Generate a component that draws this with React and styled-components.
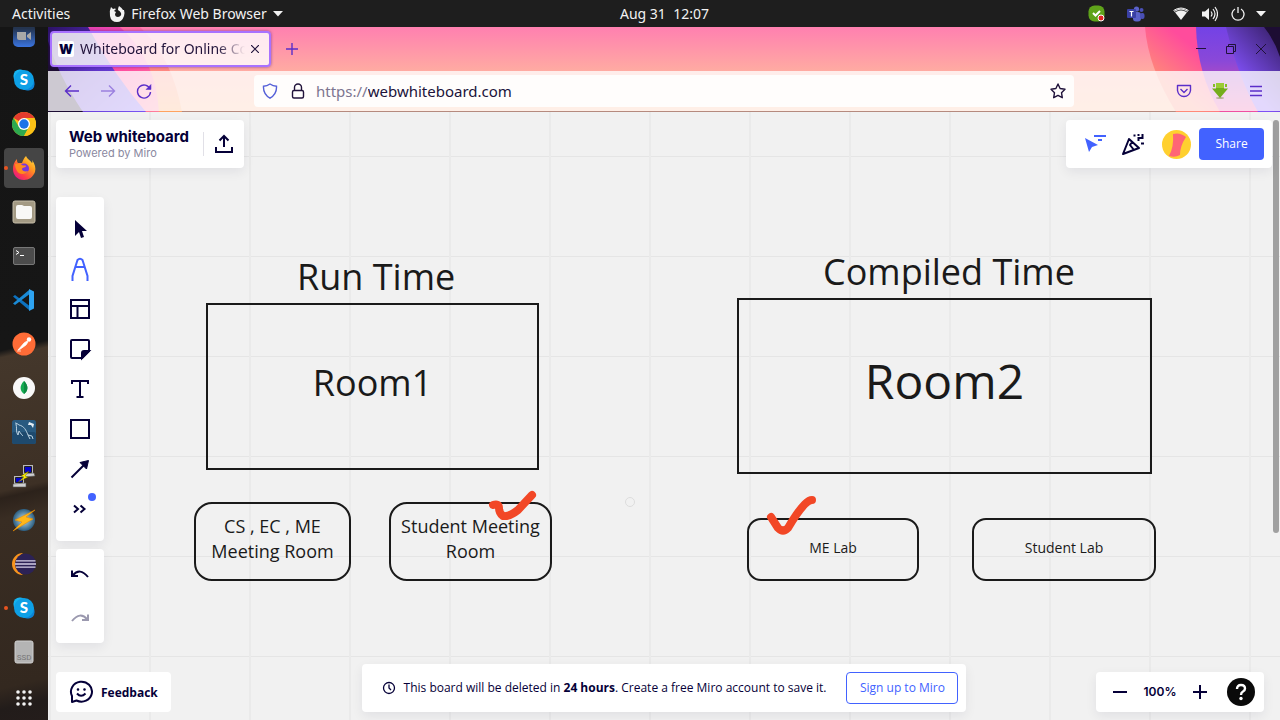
import React from "react";
import styled, { createGlobalStyle } from "styled-components";

const INK = "#050038";
const BLUE = "#4262ff";
const VIOLET = "#5b2ec9";
const UI_FONT = '"Noto Sans", "Open Sans", sans-serif';
const BOARD_FONT = '"Open Sans", "Noto Sans", sans-serif';

const GlobalStyle = createGlobalStyle`
  *, *::before, *::after { box-sizing: border-box; }
  body { margin: 0; font-family: ${UI_FONT}; }
  button { font: inherit; }
  svg { display: block; flex: none; }
`;

/* ---------- shell ---------- */

const Desktop = styled.div`
  display: flex;
  flex-direction: column;
  height: 100vh;
  overflow: hidden;
`;

const Workspace = styled.div`
  display: flex;
  flex: 1;
  min-height: 0;
`;

const PlainButton = styled.button`
  display: flex;
  align-items: center;
  justify-content: center;
  gap: ${(p) => p.$gap || 0}px;
  width: ${(p) => (p.$w ? `${p.$w}px` : "auto")};
  height: ${(p) => (p.$h ? `${p.$h}px` : "auto")};
  padding: 0;
  border: 0;
  background: none;
  color: inherit;
  cursor: pointer;
`;

/* ---------- system bar ---------- */

const SystemBar = styled.header`
  display: grid;
  grid-template-columns: calc(50% - 20px) 1fr auto;
  align-items: center;
  height: 27px;
  background: #1e1e1e;
  color: #f2f2f2;
  font-size: 14px;
  line-height: 20px;
  white-space: pre;
`;

const SystemMenus = styled.nav`
  display: flex;
  align-items: center;
  gap: 39px;
  padding-left: 12px;
`;

const Tray = styled.div`
  display: flex;
  align-items: center;
  padding-right: 10px;
`;

const TrayItem = styled.span`
  display: flex;
  justify-content: center;
  width: ${(p) => p.$w}px;
`;

/* ---------- dock ---------- */

const DockBar = styled.aside`
  display: flex;
  flex: none;
  flex-direction: column;
  justify-content: flex-end;
  width: 48px;
  overflow: hidden;
  background: linear-gradient(
    167deg,
    #151515 0%,
    #161616 46%,
    #44372b 47%,
    #3d3025 66%,
    #2c221b 67%,
    #392d23 70%,
    #33281f 94%,
    #221c1a 97%,
    #241d1b 100%
  );
`;

const DockItem = styled.button`
  position: relative;
  display: flex;
  flex: none;
  align-items: center;
  justify-content: center;
  width: 40px;
  height: 40px;
  margin: 2px 4px;
  padding: 0;
  border: 0;
  border-radius: 4px;
  background: ${(p) => (p.$active ? "#454545" : "transparent")};

  &:last-child {
    margin-top: 4px;
  }

  &::before {
    content: "";
    display: ${(p) => (p.$running ? "block" : "none")};
    position: absolute;
    left: 0;
    width: 4px;
    height: 4px;
    border-radius: 50%;
    background: #e95420;
  }
`;

/* ---------- browser chrome ---------- */

const Browser = styled.main`
  display: flex;
  flex: 1;
  flex-direction: column;
  min-width: 0;
`;

const Chrome = styled.div`
  position: relative;
  border-bottom: 1px solid #b58a7e;
  background: linear-gradient(#ff80b0, #ffaba2 44px, #ffb690);
`;

const ChromeArt = styled.svg`
  position: absolute;
  top: 0;
  ${(p) => p.$side}: 0;
`;

const TabStrip = styled.div`
  position: relative;
  display: flex;
  align-items: center;
  height: 44px;
  padding: 0 4px 0 2px;
  color: #20123a;
`;

const Tab = styled.div`
  display: flex;
  align-items: center;
  gap: 6px;
  width: 221px;
  height: 36px;
  padding: 0 10px 0 6px;
  border: 2px solid #a872ff;
  border-radius: 4px;
  background: rgba(255, 255, 255, 0.82);
  box-shadow: 0 0 3px rgba(60, 20, 140, 0.6);
  font-size: 14px;
  line-height: 20px;
`;

const Favicon = styled.span`
  flex: none;
  width: 16px;
  border-radius: 2px;
  background: #fff;
  color: ${INK};
  font: 900 13px/16px Inter, sans-serif;
  text-align: center;
`;

const TabTitle = styled.span`
  flex: 1;
  min-width: 0;
  white-space: nowrap;
  mask-image: linear-gradient(90deg, #000 calc(100% - 28px), transparent);
`;

const WindowControls = styled.div`
  display: flex;
  margin-left: auto;
`;

const NavBar = styled.div`
  position: relative;
  display: flex;
  align-items: center;
  height: 40px;
  background: rgba(255, 255, 255, 0.78);
  color: ${VIOLET};
`;

const NavGroup = styled.div`
  display: flex;
  justify-content: ${(p) => (p.$end ? "flex-end" : "flex-start")};
  width: 206px;
  padding: 0 6px;
`;

const AddressBar = styled.form`
  display: flex;
  flex: 1;
  align-items: center;
  height: 32px;
  padding: 0 2px;
  border-radius: 4px;
  background: rgba(255, 255, 255, 0.85);
  color: #20123a;
  font-size: 15px;
  line-height: 20px;
`;

const Scheme = styled.label`
  padding-left: 4px;
  color: #7d7590;
`;

const AddressInput = styled.input`
  flex: 1;
  min-width: 0;
  padding: 0;
  border: 0;
  outline: 0;
  background: none;
  color: #20123a;
  font: inherit;
`;

/* ---------- board ---------- */

const Board = styled.section`
  position: relative;
  flex: 1;
  overflow: hidden;
  background-color: #f1f1f1;
  background-image: linear-gradient(90deg, #eaeaea 2px, transparent 2px),
    linear-gradient(#e5e5e5 1px, transparent 1px);
  background-position: 1px 44px;
  background-size: 100px 100px;
  font-family: ${BOARD_FONT};
`;

const Heading = styled.h2`
  position: absolute;
  left: ${(p) => p.$x}px;
  top: ${(p) => p.$y}px;
  margin: 0;
  color: #1a1a1a;
  font-size: 36px;
  font-weight: 400;
  line-height: 48px;
  white-space: nowrap;
`;

const Shape = styled.div`
  position: absolute;
  left: ${(p) => p.$x}px;
  top: ${(p) => p.$y}px;
  display: flex;
  align-items: center;
  justify-content: center;
  width: ${(p) => p.$w}px;
  height: ${(p) => p.$h}px;
  padding: 0 8px ${(p) => p.$lift}px;
  border: 2px solid #1a1a1a;
  border-radius: ${(p) => p.$round || 0}px;
  color: #1a1a1a;
  font-size: ${(p) => p.$size}px;
  line-height: ${(p) => p.$line}px;
  text-align: center;
`;

const Ink = styled.svg`
  position: absolute;
  left: ${(p) => p.$x}px;
  top: ${(p) => p.$y}px;
`;

const ScrollThumb = styled.div`
  position: absolute;
  top: 8px;
  right: 1px;
  width: 6px;
  height: 68%;
  border-radius: 3px;
  background: #a0a0a0;
`;

const Overlay = styled.div`
  position: absolute;
  inset: 0;
  display: flex;
  flex-direction: column;
  padding: 8px;
`;

const TopRow = styled.div`
  display: flex;
  justify-content: space-between;
`;

const Panel = styled.div`
  display: flex;
  align-items: center;
  height: ${(p) => p.$h}px;
  padding: ${(p) => p.$pad || 0};
  border-radius: 4px;
  background: #fff;
  box-shadow: 0 4px 12px rgba(5, 0, 56, 0.07);
  color: ${INK};
`;

const BrandBlock = styled.div`
  width: 134px;
  font-family: Inter, sans-serif;
  white-space: nowrap;
`;

const BrandName = styled.div`
  font-size: 15px;
  font-weight: 700;
  line-height: 18px;
`;

const BrandNote = styled.div`
  color: #8a88a0;
  font-size: 11px;
  line-height: 14px;
`;

const Divider = styled.span`
  width: 1px;
  height: 24px;
  background: #e1e0e7;
`;

const Avatar = styled(PlainButton)`
  margin: 0 8px 0 10px;
`;

const ShareButton = styled.button`
  width: 65px;
  height: 32px;
  padding: 0;
  border: 0;
  border-radius: 4px;
  background: ${BLUE};
  color: #fff;
  font-size: 12px;
  line-height: 16px;
`;

const ToolRail = styled.div`
  display: flex;
  flex-direction: column;
  gap: 8px;
  width: 48px;
  margin-top: 29px;
`;

const ToolPanel = styled.div`
  display: flex;
  flex-direction: column;
  align-items: center;
  padding: ${(p) => p.$pad}px 0;
  border-radius: 4px;
  background: #fff;
  box-shadow: 0 4px 12px rgba(5, 0, 56, 0.07);
`;

const ToolButton = styled(PlainButton)`
  position: relative;
  color: ${(p) => p.$tint || INK};
`;

const NewDot = styled.span`
  position: absolute;
  top: 4px;
  right: 0;
  width: 8px;
  height: 8px;
  border-radius: 50%;
  background: ${BLUE};
`;

const BottomRow = styled.div`
  display: grid;
  grid-template-columns: 1fr auto 1fr;
  align-items: end;
  margin-top: auto;
`;

const FeedbackButton = styled.button`
  display: flex;
  align-items: center;
  justify-self: start;
  gap: 8px;
  height: 40px;
  padding: 0 13px;
  border: 0;
  border-radius: 4px;
  background: #fff;
  color: ${INK};
  font-size: 12px;
  font-weight: 700;
`;

const Notice = styled(Panel)`
  gap: 8px;
  font-size: 12px;
  line-height: 16px;
  white-space: nowrap;
`;

const SignUp = styled.button`
  width: 112px;
  height: 32px;
  margin-left: 12px;
  padding: 0;
  border: 1px solid ${BLUE};
  border-radius: 4px;
  background: #fff;
  color: ${BLUE};
  font-size: 12px;
  line-height: 16px;
`;

const ZoomPanel = styled(Panel)`
  justify-self: end;
  margin-right: 8px;
`;

const ZoomValue = styled.output`
  width: 48px;
  font: 600 12px/16px Inter, sans-serif;
  text-align: center;
`;

const HelpButton = styled(PlainButton)`
  margin-left: 11px;
`;

/* ---------- icons ---------- */

const Line = ({ s = 24, w = 2, children, ...rest }) => (
  <svg width={s} height={s} viewBox={`0 0 ${s} ${s}`} fill="none" stroke="currentColor" strokeWidth={w} {...rest}>
    {children}
  </svg>
);

const Skype = () => (
  <svg width="24" height="24" viewBox="0 0 24 24">
    <rect x="1.500" y="1.500" width="13" height="13" rx="6" fill="#17b3f0" />
    <rect x="9" y="9" width="13.500" height="13.500" rx="6" fill="#0b84d8" />
    <circle cx="12" cy="12" r="10" fill="#0ea0e6" />
    <text x="12" y="17" textAnchor="middle" fontFamily="Lato, sans-serif" fontWeight="900" fontSize="15" fill="#fff">S</text>
  </svg>
);

const dockApps = [
  ["Zoom", <svg width="24" height="24" viewBox="0 0 24 24"><defs><linearGradient id="zm" x2="0" y2="1"><stop offset=".2" stopColor="#24344f" /><stop offset="1" stopColor="#3a74e0" /></linearGradient></defs><rect x="1" y="0" width="22" height="23" rx="5" fill="url(#zm)" /><path d="M5 8h9v8H7q-2 0-2-2zM15 11l4-3v8l-4-3z" fill="#a8a8a8" /></svg>],
  ["Skype", <Skype />],
  ["Google Chrome", <svg width="24" height="24" viewBox="0 0 24 24"><circle cx="12" cy="12" r="12" fill="#fbc116" /><path d="M12 12L1.600 6A12 12 0 0 1 22.400 6z" fill="#e33b2e" /><path d="M1.600 6A12 12 0 0 0 12 24L17 15L12 12L7 15z" fill="#2da94f" /><path d="M12 6h10.400A12 12 0 0 1 12 24l5-9z" fill="#fbc116" /><circle cx="12" cy="12" r="6" fill="#fff" /><circle cx="12" cy="12" r="4.700" fill="#1a73e8" /></svg>],
  ["Firefox", <svg width="24" height="24" viewBox="0 0 24 24"><defs><linearGradient id="ff" x1="1" y1="0" x2=".2" y2="1"><stop offset="0" stopColor="#fff14a" /><stop offset=".4" stopColor="#ff9a1f" /><stop offset=".75" stopColor="#ff3f45" /><stop offset="1" stopColor="#e3168a" /></linearGradient></defs><path d="M14 0c1 3 4 4 6 7 1-1 0-2 0-3 3 4 4 8 3 12-2 5-6 8-11 8C5 24 1 19 1 13 1 9 2 6 5 3c0 2 0 3 1 4l4 0c1-3 2-5 4-7z" fill="url(#ff)" /><circle cx="12" cy="12.500" r="5" fill="#7a36dc" /><path d="M3 8c3 0 5-1 7 1 1 1 4 0 4 1 0 2-4 1-4 3s3 3 6 2c-2 4-9 4-11 0-1-2-2-4-2-7z" fill="#ff8a1e" /></svg>, true, true],
  ["Files", <svg width="24" height="24" viewBox="0 0 24 24"><rect x="1" y="1" width="22" height="22" rx="2" fill="#a39a84" stroke="#c5bda9" /><path d="M4 7q0-2 2-2h4l2 1h6q2 0 2 2v9q0 2-2 2H6q-2 0-2-2z" fill="#f8f8f6" /></svg>],
  ["Terminal", <svg width="24" height="24" viewBox="0 0 24 24"><rect x="1.500" y="3.500" width="21" height="17" rx="1.500" fill="#4c4c4c" stroke="#777" /><path d="M4 6.500l3 2-3 2M8 11.500h4" stroke="#fff" fill="none" /></svg>],
  ["Visual Studio Code", <svg width="24" height="24" viewBox="0 0 24 24"><path d="M1 8.500L3 7l14 10.500V22z" fill="#0d72c0" /><path d="M1 15.500L3 17 17 6.500V2z" fill="#1a8ad6" /><path d="M17 1l5 2.500v17L17 23z" fill="#2ea3f0" /></svg>],
  ["Postman", <svg width="24" height="24" viewBox="0 0 24 24"><circle cx="12" cy="12" r="11.500" fill="#ff6c37" /><path d="M6 18l6-7 3-2 1 1-2 3-7 5zM5 19h4" fill="#fff" stroke="#fff" strokeWidth=".7" /><circle cx="17" cy="7.500" r="2.200" fill="#fff" /></svg>],
  ["MongoDB Compass", <svg width="24" height="24" viewBox="0 0 24 24"><circle cx="12" cy="12" r="11" fill="#f8f8f8" /><path d="M12 5c5 5 4 10 0 13-4-3-5-8 0-13z" fill="#13aa52" /><path d="M12 5c5 5 4 10 0 13z" fill="#0d8a42" /></svg>],
  ["MySQL Workbench", <svg width="24" height="24" viewBox="0 0 24 24"><rect x="0" y="0" width="24" height="24" rx="2.500" fill="#285a80" /><rect y="12" width="24" height="12" rx="2.500" fill="#1e4a6e" /><path d="M3 3c1 0 3 1 4 2 5 1 7 5 9 10l4 1 1 3M4 4c1 4 0 6 1 9l1 2 1-4c2 3 3 4 4 5M16 15l2 4" stroke="#bcd3e2" fill="none" /><path d="M17 2l5 2-1 4-2-3-3 0z" fill="#e5edf3" /></svg>],
  ["PuTTY", <svg width="24" height="24" viewBox="0 0 24 24"><path d="M11 1h10v9H11zM2 12h10v9H2z" fill="#b9b9b9" /><path d="M12.500 2.500h7v6h-7zM3.500 13.500h7v5h-7z" fill="#0505c8" stroke="#222" /><path d="M12 10l10-1 1 3-11 1zM1 20l13-1v4H1z" fill="#cfcfcf" stroke="#555" strokeWidth=".6" /><path d="M17 7l-8 5 3 1-6 5 10-5-3-1z" fill="#fff200" stroke="#554f00" strokeWidth=".4" /></svg>],
  ["Lightning browser", <svg width="24" height="24" viewBox="0 0 24 24"><defs><radialGradient id="gl"><stop offset="0" stopColor="#bde0ee" /><stop offset="1" stopColor="#2b5d80" /></radialGradient></defs><circle cx="12" cy="12" r="11" fill="url(#gl)" /><path d="M23 2L3 12l7 2-9 9 20-12-7-2z" fill="#ffb81a" stroke="#e88a00" strokeWidth=".6" /></svg>],
  ["Eclipse", <svg width="24" height="24" viewBox="0 0 24 24"><path d="M11 1A11 11 0 0 0 11 23Q5 19 5 12t6-11z" fill="#f7941e" /><circle cx="13.500" cy="12" r="10.500" fill="#2c2255" /><path d="M4 8.800h19.500M3 12h21M4 15.200h19.500" stroke="#d5cfe6" strokeWidth="1.300" /></svg>],
  ["Skype call", <Skype />, false, true],
  ["SSD volume", <svg width="24" height="24" viewBox="0 0 24 24"><rect x="3" y="1" width="18" height="22" rx="2" fill="#b4b4b4" stroke="#d0d0d0" /><text x="12" y="20" textAnchor="middle" fontFamily="Roboto, sans-serif" fontSize="8" fill="#777">SSD</text></svg>],
];

const AppGrid = () => (
  <svg width="18" height="18" viewBox="0 0 18 18" fill="#f4f4f4">
    {[3, 9, 15].map((y) => [3, 9, 15].map((x) => <circle key={`${x}-${y}`} cx={x} cy={y} r="1.800" />))}
  </svg>
);

const tools = [
  ["Select", <svg width="24" height="24" viewBox="0 0 24 24" fill="currentColor"><path d="M7 3v16l4-4 2 6 3-1-2-6h5z" /></svg>],
  ["Pen", <Line><path d="M4.500 24v-5l5-16q2.500-2.500 5 0l5 16v5M7 10h10" /></Line>, BLUE],
  ["Templates", <Line><rect x="3" y="3" width="18" height="18" /><path d="M3 9h18M9.500 9v12" /></Line>],
  ["Sticky note", <Line><path d="M14 21H4q-1 0-1-1V4q0-1 1-1h16q1 0 1 1v10z" /><path d="M14 21v-5q0-2 2-2h5z" fill="currentColor" /></Line>],
  ["Text", <Line><path d="M4 7V4h16v3M12 4v16M8.500 20h7" /></Line>],
  ["Shape", <Line><rect x="3" y="3" width="18" height="18" /></Line>],
  ["Connection line", <Line><path d="M3.500 20.500L17 7" /><path d="M12 5.500L20.500 3.500 18.500 12z" fill="currentColor" strokeWidth="1" /></Line>],
  ["More tools", <Line><path d="M6 8.500l4 3.500-4 3.500M12.500 8.500l4 3.500-4 3.500" /></Line>],
];

const Tick = ({ x, y, d, label }) => (
  <Ink $x={x} $y={y} width="60" height="50" viewBox="0 0 60 50" fill="none" stroke="#f24726" strokeWidth="8" strokeLinecap="round" strokeLinejoin="round" role="img" aria-label={label}>
    <path d={d} />
  </Ink>
);

/* ---------- sections ---------- */

function TopBar() {
  return (
    <SystemBar>
      <SystemMenus>
        <PlainButton>Activities</PlainButton>
        <PlainButton $gap={6}>
          <svg width="16" height="16" viewBox="0 0 16 16" fill="#f2f2f2">
            <path fillRule="evenodd" d="M2 1l2 2q2-1 3 0l-2 2 2 1-1 2q0 3 3 3 4-1 3-4-1-2-3-3Q9 2 10 0q3 2 4 4l1 0q1 3 0 6-2 6-7 6-6 0-7-6Q0 5 2 1z" />
          </svg>
          Firefox Web Browser
          <svg width="10" height="6" viewBox="0 0 10 6" fill="#f2f2f2"><path d="M0 0h10L5 5.500z" /></svg>
        </PlainButton>
      </SystemMenus>
      <time>Aug 31  12:07</time>
      <Tray>
        <TrayItem $w={20}>
          <svg width="17" height="17" viewBox="0 0 17 17"><rect x=".5" y=".5" width="16" height="16" rx="6" fill="#5fa31a" /><path d="M5 8l2.500 2.500L12 6" stroke="#fff" strokeWidth="2" fill="none" /><circle cx="13" cy="13" r="3" fill="#e02424" stroke="#fff" /></svg>
        </TrayItem>
        <TrayItem $w={60}>
          <svg width="18" height="16" viewBox="0 0 18 16"><circle cx="9.500" cy="3" r="2.600" fill="#5b62c9" /><circle cx="14.500" cy="4" r="2" fill="#4a50b5" /><rect x="6" y="6" width="8" height="9.500" rx="3" fill="#5b62c9" /><rect x="13" y="7" width="4.500" height="6" rx="2" fill="#4a50b5" /><rect x="0" y="3" width="9" height="9" rx="1" fill="#3a40a5" /><path d="M2.500 5.500h4M4.500 5.500v5" stroke="#fff" strokeWidth="1.200" /></svg>
        </TrayItem>
        <TrayItem $w={30}>
          <svg width="16" height="14" viewBox="0 0 16 14"><path d="M1 4q7-5 14 0L8 13z" fill="#f2f2f2" /><path d="M.5 3.500q7.500-5 15 0" stroke="#f2f2f2" fill="none" /><path d="M2 5q6-4 12 0" stroke="#1e1e1e" strokeWidth=".8" fill="none" /></svg>
        </TrayItem>
        <TrayItem $w={28}>
          <svg width="16" height="16" viewBox="0 0 16 16" fill="none" stroke="#f2f2f2" strokeWidth="1.200"><path d="M0 5.500h3L7 2v12l-4-3.500H0z" fill="#f2f2f2" stroke="none" /><path d="M9 5.500q2 2.500 0 5M11 3q4 5 0 10M13 1q5 7 0 14" /></svg>
        </TrayItem>
        <TrayItem $w={28}>
          <svg width="14" height="14" viewBox="0 0 14 14" fill="none" stroke="#f2f2f2" strokeWidth="1.300"><path d="M4 2a6 6 0 1 0 6 0M7 0v6" /></svg>
        </TrayItem>
        <TrayItem $w={18}>
          <svg width="10" height="6" viewBox="0 0 10 6" fill="#f2f2f2"><path d="M0 0h10L5 5.500z" /></svg>
        </TrayItem>
      </Tray>
    </SystemBar>
  );
}

function Dock() {
  return (
    <DockBar aria-label="Applications">
      {dockApps.map(([name, icon, active, running]) => (
        <DockItem key={name} aria-label={name} $active={active} $running={running}>{icon}</DockItem>
      ))}
      <DockItem aria-label="Show applications"><AppGrid /></DockItem>
    </DockBar>
  );
}

function BrowserChrome() {
  return (
    <Chrome>
      <ChromeArt $side="left" width="160" height="85" viewBox="0 0 160 85" aria-hidden="true">
        <defs>
          <linearGradient id="lp" x2="1" y2="1"><stop offset="0" stopColor="#2c1266" /><stop offset=".5" stopColor="#5f35c8" /><stop offset="1" stopColor="#7a55f5" /></linearGradient>
          <linearGradient id="lm" x2="1" y2="1"><stop offset="0" stopColor="#d83bb8" /><stop offset=".6" stopColor="#ff4f9f" /><stop offset="1" stopColor="#ff7f9a" /></linearGradient>
          <linearGradient id="lo" x2="0" y2="1"><stop offset="0" stopColor="#ff6aa6" /><stop offset="1" stopColor="#ffa35f" /></linearGradient>
        </defs>
        <path d="M0 0H92Q124 30 134 85H0z" fill="url(#lo)" />
        <path d="M0 0H72Q108 32 111 85H0z" fill="url(#lm)" />
        <path d="M0 0H40Q66 48 98 85H0z" fill="url(#lp)" />
        <path d="M0 14Q10 48 35 85H0z" fill="#1d0d33" />
      </ChromeArt>
      <ChromeArt $side="right" width="150" height="85" viewBox="0 0 150 85" aria-hidden="true">
        <defs>
          <linearGradient id="rm" x1="0" y1=".6" x2=".5" y2=".2"><stop offset=".1" stopColor="#ff8a78" /><stop offset=".8" stopColor="#ff4c9c" /></linearGradient>
          <linearGradient id="rp" x2="0" y2="1"><stop offset="0" stopColor="#7342e6" /><stop offset=".4" stopColor="#8a48d8" /><stop offset="1" stopColor="#f050a0" /></linearGradient>
          <linearGradient id="rv" x1=".9" y1="0" x2=".4" y2=".7"><stop offset="0" stopColor="#38206a" /><stop offset="1" stopColor="#8050f5" /></linearGradient>
        </defs>
        <path d="M15 0Q18 40 46 85H150V0z" fill="url(#rm)" />
        <path d="M66 0Q67 46 90 85H150V0z" fill="url(#rp)" />
        <path d="M96 0Q108 50 128 85H150V0z" fill="url(#rv)" />
        <path d="M134 0Q145 14 150 30V0z" fill="#1d0d33" />
      </ChromeArt>
      <TabStrip>
        <Tab>
          <Favicon>W</Favicon>
          <TabTitle>Whiteboard for Online Co</TabTitle>
          <PlainButton aria-label="Close tab" $w={8} $h={20}>
            <Line s={8} w={1.2}><path d="M0 0l8 8M8 0L0 8" /></Line>
          </PlainButton>
        </Tab>
        <PlainButton aria-label="New tab" $w={42} $h={36}>
          <Line s={12} w={1.4} color={VIOLET}><path d="M6 0v12M0 6h12" /></Line>
        </PlainButton>
        <WindowControls>
          <PlainButton aria-label="Minimize" $w={30} $h={30}><Line s={10} w={1}><path d="M0 4.500h10" /></Line></PlainButton>
          <PlainButton aria-label="Restore" $w={30} $h={30}><Line s={10} w={1}><path d="M.5 2.500h7v7h-7zM2.500 2.500v-2h7v7h-2" /></Line></PlainButton>
          <PlainButton aria-label="Close window" $w={30} $h={30}><Line s={10} w={1}><path d="M0 0l10 10M10 0L0 10" /></Line></PlainButton>
        </WindowControls>
      </TabStrip>
      <NavBar>
        <NavGroup>
          <PlainButton aria-label="Back" $w={36} $h={32}><Line s={16} w={1.4}><path d="M15 8H1.500M7 2.500L1.500 8 7 13.500" /></Line></PlainButton>
          <PlainButton aria-label="Forward" $w={36} $h={32}><Line s={16} w={1.4} opacity=".5"><path d="M1 8h13.500M9 2.500L14.500 8 9 13.500" /></Line></PlainButton>
          <PlainButton aria-label="Reload" $w={36} $h={32}><Line s={16} w={1.4}><path d="M14 6A6.500 6.500 0 1 0 14.500 9" /><path d="M15 1.500v5h-5z" fill="currentColor" strokeWidth=".5" /></Line></PlainButton>
        </NavGroup>
        <AddressBar>
          <PlainButton type="button" aria-label="Tracking protection" $w={28} $h={28}>
            <Line s={16} w={1.4} color="#5560d8"><path d="M8 1q3 2 6.500 2.200Q15 11 8 15.200 1 11 1.500 3.200 5 3 8 1z" /></Line>
          </PlainButton>
          <PlainButton type="button" aria-label="Site information" $w={28} $h={28}>
            <Line s={16} w={1.4}><rect x="2.500" y="7.500" width="11" height="7.500" rx="1.500" /><path d="M4.500 7.500V4.500a3.500 3.500 0 0 1 7 0v3" /></Line>
          </PlainButton>
          <Scheme htmlFor="address">https://</Scheme>
          <AddressInput id="address" defaultValue="webwhiteboard.com" />
          <PlainButton type="button" aria-label="Bookmark this page" $w={28} $h={28}>
            <Line s={16} w={1.4} strokeLinejoin="round"><path d="M8 1l2.100 4.500 4.900.7-3.500 3.500.8 5L8 12.400l-4.300 2.300.8-5L1 6.200l4.900-.7z" /></Line>
          </PlainButton>
        </AddressBar>
        <NavGroup $end>
          <PlainButton aria-label="Save to Pocket" $w={36} $h={32}><Line s={16} w={1.4} strokeLinejoin="round"><path d="M1.500 2.500h13v5q-1 6-6.500 6t-6.500-6z" /><path d="M4.500 6L8 9.500 11.500 6" /></Line></PlainButton>
          <PlainButton aria-label="Downloads" $w={36} $h={32}>
            <svg width="16" height="16" viewBox="0 0 16 16"><ellipse cx="8" cy="15" rx="4" ry="1" fill="#b9b09c" /><path d="M4 0h8v5.500h4L8 15 0 5.500h4z" fill="#74ad1c" /><path d="M4 0h8v5H4z" fill="#9ccc35" /><path d="M1 1h2v3H1zM13 1h2v3h-2z" fill="#86bd26" /></svg>
          </PlainButton>
          <PlainButton aria-label="Menu" $w={36} $h={32}><Line s={12} w={1.4}><path d="M0 1.500h12M0 6h12M0 10.500h12" /></Line></PlainButton>
        </NavGroup>
      </NavBar>
    </Chrome>
  );
}

function Whiteboard() {
  return (
    <Board>
      <Heading $x={249} $y={141}>Run Time</Heading>
      <Heading $x={775} $y={136}>Compiled Time</Heading>
      <Shape $x={158} $y={191} $w={333} $h={167} $size={36} $line={48} $lift={8}>Room1</Shape>
      <Shape $x={689} $y={186} $w={415} $h={176} $size={48} $line={64} $lift={10}>Room2</Shape>
      <Shape $x={146} $y={390} $w={157} $h={79} $round={18} $size={18} $line={25} $lift={6}>CS , EC , ME<br />Meeting Room</Shape>
      <Shape $x={341} $y={390} $w={163} $h={79} $round={18} $size={18} $line={25} $lift={6}>Student Meeting<br />Room</Shape>
      <Shape $x={699} $y={406} $w={172} $h={63} $round={14} $size={14} $line={20} $lift={4}>ME Lab</Shape>
      <Shape $x={924} $y={406} $w={184} $h={63} $round={14} $size={14} $line={20} $lift={4}>Student Lab</Shape>
      <Tick x={432} y={371} d="M13 22q6-2 6 3t4 8q6 1 15-6l14-15" label="Student Meeting Room selected" />
      <Tick x={710} y={380} d="M13 25l7 11q5 5 10 0Q40 19 47 12q4-4 7-4" label="ME Lab selected" />
      <Ink $x={577} $y={385} width="10" height="10" fill="none" stroke="#dcdcdc" aria-hidden="true"><circle cx="5" cy="5" r="4.500" /></Ink>
      <ScrollThumb />
      <Overlay>
        <TopRow>
          <Panel $h={48} $pad="0 0 0 13px">
            <BrandBlock>
              <BrandName>Web whiteboard</BrandName>
              <BrandNote>Powered by Miro</BrandNote>
            </BrandBlock>
            <Divider />
            <PlainButton aria-label="Export" $w={40} $h={40}>
              <Line><path d="M12 15V4M7.500 8.500L12 4l4.500 4.500M4 15v5h16v-5" /></Line>
            </PlainButton>
          </Panel>
          <Panel $h={48} $pad="0 8px 0 10px">
            <PlainButton aria-label="Collaborators' cursors" $w={38} $h={40}>
              <svg width="24" height="24" viewBox="0 0 24 24" fill={BLUE}><path d="M2 6l13 7-6 2-3 5zM11 3h12v2H11zM15 7h4v2h-4z" /></svg>
            </PlainButton>
            <PlainButton aria-label="Reactions" $w={38} $h={40}>
              <Line strokeLinejoin="round"><path d="M8 7L2 22l16-6zM8 7l10 9M11 10l-2 3 4 5" /><path d="M17.500 9V6h4V2M20 11.500h3" strokeLinejoin="miter" /><path d="M12.500 3.500h2M16.500 3h2" /></Line>
            </PlainButton>
            <Avatar aria-label="Profile" $w={29} $h={29}>
              <svg width="29" height="29" viewBox="0 0 29 29"><circle cx="14.500" cy="14.500" r="14.500" fill="#ffd02f" /><path d="M11 4q7-2 13 3-6 9-6 18-5 3-11 1 5-9 4-22z" fill="#ff6575" /></svg>
            </Avatar>
            <ShareButton>Share</ShareButton>
          </Panel>
        </TopRow>
        <ToolRail>
          <ToolPanel $pad={12}>
            {tools.map(([name, icon, tint]) => (
              <ToolButton key={name} aria-label={name} $w={32} $h={40} $tint={tint}>
                {icon}
                {name === "More tools" && <NewDot />}
              </ToolButton>
            ))}
          </ToolPanel>
          <ToolPanel $pad={3}>
            <ToolButton aria-label="Undo" $w={44} $h={44}><Line><path d="M4 8.500V14h6M4.500 13.500Q12 5 20 15" /></Line></ToolButton>
            <ToolButton aria-label="Redo" $w={44} $h={44} $tint="#9b99af"><Line><path d="M20 8.500V14h-6M19.500 13.500Q12 5 4 15" /></Line></ToolButton>
          </ToolPanel>
        </ToolRail>
        <BottomRow>
          <FeedbackButton>
            <Line><path d="M3 22v-6a10.500 10 0 1 1 4.500 4.500z" strokeLinejoin="round" /><path d="M8 13.500q4 4.500 8.500 0" /><circle cx="9" cy="9.500" r=".7" fill="currentColor" strokeWidth="1.200" /><circle cx="15.500" cy="9.500" r=".7" fill="currentColor" strokeWidth="1.200" /></Line>
            Feedback
          </FeedbackButton>
          <Notice $h={48} $pad="0 8px 0 20px" role="status">
            <Line s={14} w={1.3}><circle cx="7" cy="7" r="5.500" /><path d="M7 3.500V7l2 2" /></Line>
            <span>This board will be deleted in <b>24 hours</b>. Create a free Miro account to save it.</span>
            <SignUp>Sign up to Miro</SignUp>
          </Notice>
          <ZoomPanel $h={40} $pad="0 9px 0 8px">
            <PlainButton aria-label="Zoom out" $w={32} $h={32}><Line s={14}><path d="M0 7h14" /></Line></PlainButton>
            <ZoomValue>100%</ZoomValue>
            <PlainButton aria-label="Zoom in" $w={32} $h={32}><Line s={14}><path d="M0 7h14M7 0v14" /></Line></PlainButton>
            <HelpButton aria-label="Help" $w={28} $h={28}>
              <svg width="28" height="28" viewBox="0 0 28 28"><circle cx="14" cy="14" r="14" fill="#0a0a0a" /><path d="M10 11q0-4 4-4t4 3.500q0 2-2 3t-2 3.500" fill="none" stroke="#fff" strokeWidth="2.400" /><circle cx="14" cy="20.500" r="1.700" fill="#fff" /></svg>
            </HelpButton>
          </ZoomPanel>
        </BottomRow>
      </Overlay>
    </Board>
  );
}

export default function App() {
  return (
    <Desktop>
      <GlobalStyle />
      <TopBar />
      <Workspace>
        <Dock />
        <Browser>
          <BrowserChrome />
          <Whiteboard />
        </Browser>
      </Workspace>
    </Desktop>
  );
}
